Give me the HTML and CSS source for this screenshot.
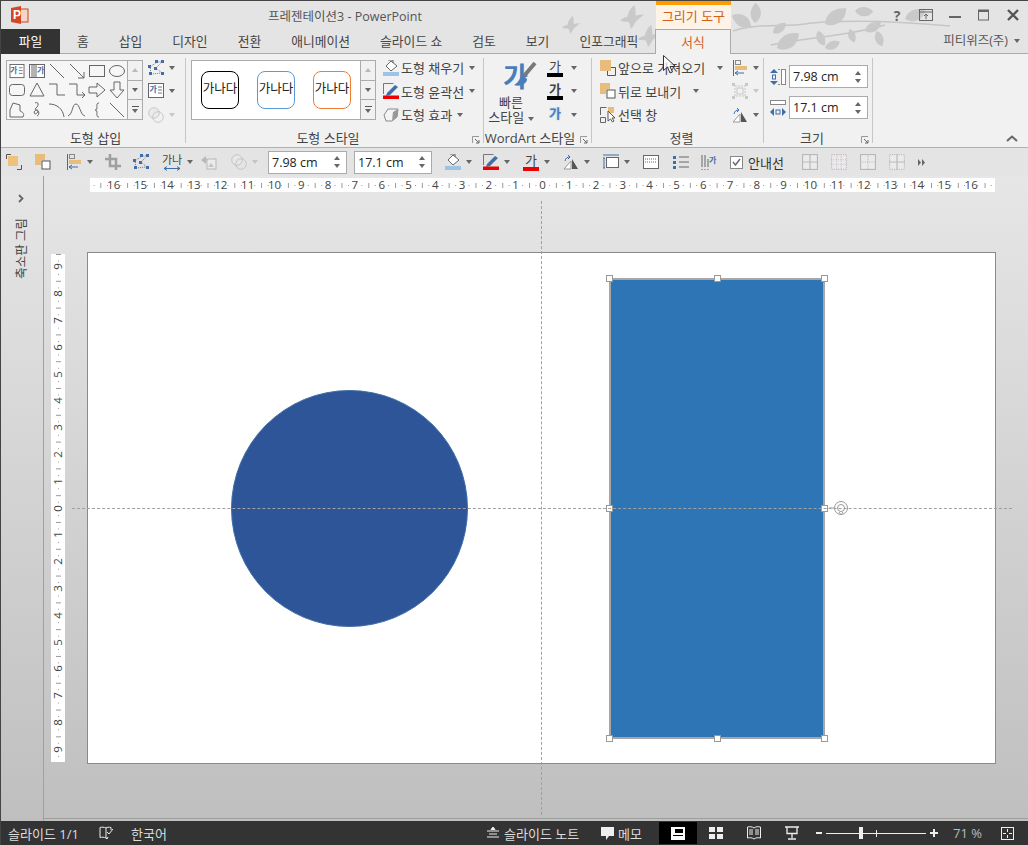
FILE: index.html
```html
<!doctype html>
<html lang="ko">
<head>
    <meta charset="UTF-8">
    <title>프레젠테이션3 - PowerPoint</title>
    <link rel="stylesheet" href="styles.css">
</head>
<body>
<svg class="defs" width="0" height="0">
    <symbol id="edit" viewBox="0 0 16 16">
        <path d="M2 7 9 2 14 2 8 8 14 13 3 14Z" fill="none" stroke="#777" stroke-dasharray="1 1"/>
        <path d="M0 5h3v3H0zM7 0h3v3H7zM13 0h3v3h-3zM6 7h3v3H6zM13 12h3v3h-3zM1 12h3v3H1z" fill="#3f6fa8"/>
    </symbol>
    <symbol id="tbox" viewBox="0 0 16 16">
        <rect x=".5" y=".5" width="15" height="14" fill="#fff" stroke="#666"/>
        <path d="M10 4h4M10 7h4M10 10h4" stroke="#777"/>
    </symbol>
    <symbol id="merge" viewBox="0 0 16 16">
        <circle cx="6" cy="6" r="5.3" fill="#e8e8e8" stroke="#bbb"/>
        <circle cx="10" cy="10" r="5.3" fill="none" stroke="#bbb"/>
    </symbol>
    <symbol id="fill" viewBox="0 0 16 16">
        <path d="M8 1 14 6 8 11 3 6Z" fill="#fff" stroke="#666"/>
        <path d="M5 0h5v3" fill="none" stroke="#666"/>
        <rect y="12" width="16" height="4" fill="#9dc3e6"/>
    </symbol>
    <symbol id="pen" viewBox="0 0 16 16">
        <path d="M.5 11V.5h10" fill="none" stroke="#777"/>
        <path d="M4 10 12 2l3 2-8 8-4 1Z" fill="#3f6fa8"/>
        <rect y="12.5" width="16" height="3.5" fill="#e00"/>
    </symbol>
    <symbol id="fx" viewBox="0 0 16 16">
        <path d="M1 8 5 2h10l-1 8-5 4H3Z" fill="#f4f4f4" stroke="#888"/>
        <path d="M9 14l5-4 1-8-5 3Z" fill="#999"/>
    </symbol>
    <symbol id="front" viewBox="0 0 16 16">
        <rect width="11" height="11" fill="#e8bd7c"/>
        <path d="M11 7.500h4.500v8h-8V11" fill="none" stroke="#555"/>
    </symbol>
    <symbol id="back" viewBox="0 0 16 16">
        <path d="M0 0h10v6H6v5H0Z" fill="#e8bd7c"/>
        <rect x="7" y="7" width="8" height="8" fill="#fff" stroke="#555"/>
    </symbol>
    <symbol id="pick" viewBox="0 0 16 16">
        <path d="M.5 8V.5h6M.5 10.500h5v5h-5z" fill="none" stroke="#666"/>
        <rect x="8" width="6" height="6" fill="#e8bd7c"/>
        <path d="M8 4v10l2.500-2 2 3 1.500-1-2-3h3Z" fill="#fff" stroke="#555"/>
    </symbol>
    <symbol id="align" viewBox="0 0 16 16">
        <path d="M1.500 0v16" stroke="#666"/>
        <rect x="3.500" y=".5" width="5" height="4" fill="none" stroke="#888"/>
        <rect x="3" y="6" width="12" height="4" fill="#e8bd7c"/>
        <path d="M3 13h9M3 13l3-2M3 13l3 2" stroke="#3f6fa8" fill="none"/>
    </symbol>
    <symbol id="group" viewBox="0 0 16 16">
        <path d="M3 3h10v10H3z" fill="none" stroke="#bbb" stroke-dasharray="2 1"/>
        <path d="M0 0h3v3H0zM13 0h3v3h-3zM0 13h3v3H0zM13 13h3v3h-3z" fill="#bbb"/>
        <rect x="5" y="5" width="6" height="6" fill="none" stroke="#bbb"/>
    </symbol>
    <symbol id="turn" viewBox="0 0 16 16">
        <path d="M1 15 8 7v8Z" fill="#fff" stroke="#999"/>
        <path d="M9 5v10h6Z" fill="#555"/>
        <path d="M2 7a5 5 0 0 1 5-4M5 1l2 2-2 2" fill="none" stroke="#3f6fa8"/>
    </symbol>
    <symbol id="height" viewBox="0 0 16 16">
        <rect x="11.500" y=".5" width="4" height="15" fill="#fff" stroke="#888"/>
        <path d="M4 0 0 4h8ZM4 16l-4-4h8Z" fill="#3f6fa8"/>
        <rect x="2.500" y="6" width="3" height="4" fill="none" stroke="#3f6fa8"/>
        <path d="M8 .5h2M8 15.500h2" stroke="#888"/>
    </symbol>
    <symbol id="width" viewBox="0 0 16 16">
        <rect x=".5" y=".5" width="15" height="4" fill="#fff" stroke="#888"/>
        <path d="M0 12l4-4v8ZM16 12l-4-4v8Z" fill="#3f6fa8"/>
        <rect x="6" y="10" width="4" height="4" fill="none" stroke="#3f6fa8"/>
    </symbol>
    <symbol id="launch" viewBox="0 0 8 8">
        <path d="M.5 7V.5H7" fill="none" stroke="#999"/>
        <path d="M3 3l4 4M7 4v3H4" fill="none" stroke="#666"/>
    </symbol>
    <path id="leaf" d="M0 0C4-7 13-8 20-3 16 5 6 7 0 0Z"/>
    <path id="bird" d="M0 13C2 11 4 10 6 10 7 6 9 2 12 0 13 3 13 6 13 9 15 8 18 8 20 8 18 10 15 12 13 14 12 16 11 18 9 20 9 18 8 16 7 14 5 14 2 14 0 13Z"/>
</svg>

<div class="window">
    <header class="top">
        <svg class="decor" width="400" height="53" viewBox="0 0 400 53">
            <use href="#bird" transform="translate(7 15) scale(.9)"/>
            <use href="#bird" transform="translate(65 4) scale(1.200)"/>
            <use href="#bird" transform="translate(83 24) scale(1.100)"/>
            <path d="M178 30C200 22 230 26 250 23S320 18 395 25M216 44C250 36 290 36 330 24" fill="none" stroke="#c6c6c6" stroke-width="1.500"/>
            <use href="#leaf" transform="translate(196 26) rotate(-140) scale(1.100)"/>
            <use href="#leaf" transform="translate(200 22) rotate(-80)"/>
            <use href="#leaf" transform="translate(218 32) rotate(-30) scale(.8)"/>
            <use href="#leaf" transform="translate(222 47) rotate(-25) scale(1.300)"/>
            <use href="#leaf" transform="translate(263 30) rotate(75) scale(.8)"/>
            <use href="#leaf" transform="translate(270 23) rotate(-28) scale(1.300)"/>
            <use href="#leaf" transform="translate(295 28) rotate(80) scale(.7)"/>
            <use href="#leaf" transform="translate(270 47) rotate(-15) scale(.8)"/>
            <use href="#leaf" transform="translate(300 10) rotate(10) scale(.9)"/>
            <use href="#leaf" transform="translate(310 30) rotate(-20) scale(.9)"/>
            <use href="#leaf" transform="translate(322 30) rotate(80) scale(.8)"/>
            <use href="#leaf" transform="translate(350 18) rotate(-15) scale(1.100)"/>
        </svg>
        <div class="titlebar">
            <svg class="applogo" width="18" height="18" viewBox="0 0 18 18">
                <rect x="8" y="3" width="9" height="13" fill="#f5d5c8" stroke="#c8441f"/>
                <path d="M0 2 10 0V18L0 16Z" fill="#d24726"/>
                <text x="2" y="13" class="logo">P</text>
            </svg>
            <div class="doc-title">프레젠테이션3 - PowerPoint</div>
            <div class="context">그리기 도구</div>
            <div class="winbtns">
                <span class="help">?</span>
                <svg width="14" height="12" viewBox="0 0 14 12"><rect x=".5" y=".5" width="13" height="11" fill="none" stroke="#666"/><path d="M.5 3h13M7 10V5M5 7l2-2 2 2" fill="none" stroke="#666"/></svg>
                <svg width="14" height="12" viewBox="0 0 14 12"><path d="M1 8h12" stroke="#666" stroke-width="2"/></svg>
                <svg width="14" height="12" viewBox="0 0 14 12"><rect x="1.500" y="1" width="10" height="10" fill="none" stroke="#666"/><path d="M1 2h11" stroke="#666" stroke-width="2"/></svg>
                <svg width="14" height="12" viewBox="0 0 14 12"><path d="M2 1l10 10M12 1 2 11" stroke="#555" stroke-width="2.400"/></svg>
            </div>
        </div>
        <nav class="tabs">
            <div class="tab file">파일</div>
            <div class="tab first">홈</div>
            <div class="tab">삽입</div>
            <div class="tab">디자인</div>
            <div class="tab">전환</div>
            <div class="tab">애니메이션</div>
            <div class="tab">슬라이드 쇼</div>
            <div class="tab">검토</div>
            <div class="tab">보기</div>
            <div class="tab">인포그래픽</div>
            <div class="tab active">서식</div>
            <div class="account">피티위즈(주) <i class="arr"></i></div>
        </nav>
    </header>

    <section class="ribbon">
        <div class="grp g-insert">
            <div class="grp-body">
                <div class="gallery shapes">
                    <div class="shape-grid">
                        <svg viewBox="0 0 20 20"><use href="#tbox" x="2" y="3" width="16" height="15"/><text x="3" y="12" class="tiny">가</text></svg>
                        <svg viewBox="0 0 20 20"><rect x="2.500" y="3.500" width="15" height="13" fill="#fff"/><path d="M5 4v12M7 4v12M9 4v12"/><text x="10" y="12" class="tiny">가</text></svg>
                        <svg viewBox="0 0 20 20"><path d="M3 3 17 17"/></svg>
                        <svg viewBox="0 0 20 20"><path d="M3 3 17 17M11 17h6v-6"/></svg>
                        <svg viewBox="0 0 20 20"><rect x="2.500" y="4.500" width="15" height="11"/></svg>
                        <svg viewBox="0 0 20 20"><ellipse cx="10" cy="10" rx="7.500" ry="5.500"/></svg>
                        <svg viewBox="0 0 20 20"><rect x="2.500" y="4.500" width="15" height="11" rx="3"/></svg>
                        <svg viewBox="0 0 20 20"><path d="M10 3 17 16H3Z"/></svg>
                        <svg viewBox="0 0 20 20"><path d="M2 4h8v11h8"/></svg>
                        <svg viewBox="0 0 20 20"><path d="M2 4h8v11h8M15 12l3 3-3 3"/></svg>
                        <svg viewBox="0 0 20 20"><path d="M2 7h8V3l8 7-8 7v-4H2Z"/></svg>
                        <svg viewBox="0 0 20 20"><path d="M7 2h6v8h4l-7 8-7-8h4Z"/></svg>
                        <svg viewBox="0 0 20 20"><path d="M6 3 3 10v7h13c2-4-1-5-3-6V5Z"/></svg>
                        <svg viewBox="0 0 20 20"><path d="M8 3c4-2 4 3 1 5s4 2 1 5-4-2-1-3 4 5 1 6"/></svg>
                        <svg viewBox="0 0 20 20"><path d="M2 4c8 0 14 5 15 13"/></svg>
                        <svg viewBox="0 0 20 20"><path d="M1 16C6 14 5 4 9 4s4 11 9 12"/></svg>
                        <svg viewBox="0 0 20 20"><path d="M12 3c-3 0-2 3-2 5s-2 2-2 2 2 0 2 2-1 5 2 5"/></svg>
                        <svg viewBox="0 0 20 20"><path d="M3 3 17 17"/></svg>
                    </div>
                    <div class="scroll">
                        <span class="up off"><i class="tri-up"></i></span>
                        <span><i class="arr"></i></span>
                        <span class="more"><i class="bar"></i><i class="arr"></i></span>
                    </div>
                </div>
                <div class="rows r-narrow">
                    <div class="row"><svg class="ic"><use href="#edit"/></svg><i class="arr"></i></div>
                    <div class="row"><svg class="ic" viewBox="0 0 16 16"><use href="#tbox"/><text x="1.500" y="9" class="tiny">가</text></svg><i class="arr"></i></div>
                    <div class="row off"><svg class="ic"><use href="#merge"/></svg><i class="arr"></i></div>
                </div>
            </div>
            <div class="grp-label">도형 삽입</div>
        </div>

        <div class="grp g-style">
            <div class="grp-body">
                <div class="gallery styles">
                    <div class="previews">
                        <div class="preview black">가나다</div>
                        <div class="preview blue">가나다</div>
                        <div class="preview orange">가나다</div>
                    </div>
                    <div class="scroll">
                        <span class="up off"><i class="tri-up"></i></span>
                        <span><i class="arr"></i></span>
                        <span class="more"><i class="bar"></i><i class="arr"></i></span>
                    </div>
                </div>
                <div class="rows r-style">
                    <div class="row"><svg class="ic"><use href="#fill"/></svg><span>도형 채우기</span><i class="arr"></i></div>
                    <div class="row"><svg class="ic"><use href="#pen"/></svg><span>도형 윤곽선</span><i class="arr"></i></div>
                    <div class="row"><svg class="ic"><use href="#fx"/></svg><span>도형 효과</span><i class="arr"></i></div>
                </div>
            </div>
            <div class="grp-label">도형 스타일</div>
            <svg class="launch"><use href="#launch"/></svg>
        </div>

        <div class="grp g-wordart">
            <div class="grp-body">
                <div class="quick">
                    <svg class="quick-ic" width="34" height="34" viewBox="0 0 34 34">
                        <text x="0" y="27" class="big">가</text>
                        <path d="M32 3 21 16" stroke="#7a7a7a" stroke-width="4"/>
                        <path d="M20 15c-4 2-3 7-9 10 6 2 13-1 13-6Z" fill="#4a7ebb"/>
                    </svg>
                    <span>빠른</span>
                    <span>스타일 <i class="arr"></i></span>
                </div>
                <div class="rows r-wa">
                    <div class="row"><span class="ga under">가</span><i class="arr"></i></div>
                    <div class="row"><span class="ga under heavy">가</span><i class="arr"></i></div>
                    <div class="row"><span class="ga glow">가</span><i class="arr"></i></div>
                </div>
            </div>
            <div class="grp-label">WordArt 스타일</div>
            <svg class="launch"><use href="#launch"/></svg>
        </div>

        <div class="grp g-arrange">
            <div class="grp-body">
                <div class="rows r-arr">
                    <div class="row"><svg class="ic"><use href="#front"/></svg><span>앞으로 가져오기</span><i class="arr"></i></div>
                    <div class="row"><svg class="ic"><use href="#back"/></svg><span>뒤로 보내기</span><i class="arr"></i></div>
                    <div class="row"><svg class="ic"><use href="#pick"/></svg><span>선택 창</span></div>
                </div>
                <div class="rows r-narrow">
                    <div class="row"><svg class="ic"><use href="#align"/></svg><i class="arr"></i></div>
                    <div class="row off"><svg class="ic"><use href="#group"/></svg><i class="arr"></i></div>
                    <div class="row"><svg class="ic"><use href="#turn"/></svg><i class="arr"></i></div>
                </div>
            </div>
            <div class="grp-label">정렬</div>
        </div>

        <div class="grp g-size">
            <div class="grp-body">
                <div class="size-fields">
                    <div class="size-row"><svg class="ic"><use href="#height"/></svg><div class="num"><span>7.98 cm</span><b class="spin"><i class="tri-up"></i><i class="arr"></i></b></div></div>
                    <div class="size-row"><svg class="ic"><use href="#width"/></svg><div class="num"><span>17.1 cm</span><b class="spin"><i class="tri-up"></i><i class="arr"></i></b></div></div>
                </div>
            </div>
            <div class="grp-label">크기</div>
            <svg class="launch"><use href="#launch"/></svg>
        </div>

        <svg class="collapse" width="12" height="7" viewBox="0 0 12 7"><path d="M1 6 6 1.500 11 6" fill="none" stroke="#666" stroke-width="2"/></svg>
    </section>

    <section class="qbar">
        <div class="q w29"><svg class="ic" viewBox="0 0 16 16"><rect x="2" y="2" width="10" height="10" fill="#eec27a"/><path d="M.5 5V.5H5M15.500 11v4.500H11" fill="none" stroke="#555"/></svg></div>
        <div class="q w31"><svg class="ic"><use href="#back"/></svg></div>
        <div class="q w39"><svg class="ic"><use href="#align"/></svg><i class="arr"></i></div>
        <div class="q w28 off"><svg class="ic" viewBox="0 0 16 16"><path d="M5 0v12h11M0 5h11v11" fill="none" stroke="#888" stroke-width="2.500"/></svg></div>
        <div class="q w29"><svg class="ic"><use href="#edit"/></svg></div>
        <div class="q w39"><span class="ganam">가나<svg width="18" height="5" viewBox="0 0 18 5"><path d="M1 2.500h16M1 2.500l3-2M1 2.500l3 2M17 2.500l-3-2M17 2.500l-3 2" fill="none" stroke="#3f6fa8"/></svg></span><i class="arr"></i></div>
        <div class="q w30 off"><svg class="ic" viewBox="0 0 16 16"><path d="M0 6 5 2v3h4v2H5v3Z" fill="#aaa"/><rect x="6" y="5" width="9" height="10" fill="#eee" stroke="#aaa"/><path d="M7 13l3-4 3 4Z" fill="#bbb"/></svg></div>
        <div class="q w37 off"><svg class="ic"><use href="#merge"/></svg><i class="arr"></i></div>
        <div class="num q-num"><span>7.98 cm</span><b class="spin"><i class="tri-up"></i><i class="arr"></i></b></div>
        <div class="num q-num second"><span>17.1 cm</span><b class="spin"><i class="tri-up"></i><i class="arr"></i></b></div>
        <div class="q w38"><svg class="ic"><use href="#fill"/></svg><i class="arr"></i></div>
        <div class="q w40"><svg class="ic"><use href="#pen"/></svg><i class="arr"></i></div>
        <div class="q w40"><span class="ga under red">가</span><i class="arr"></i></div>
        <div class="q w40"><svg class="ic"><use href="#turn"/></svg><i class="arr"></i></div>
        <div class="q w40"><svg class="ic" viewBox="0 0 16 16"><rect x="3.500" y="3.500" width="12" height="10" fill="#fff" stroke="#666"/><path d="M0 1h16M1 4v10M0 4h2M0 14h2" fill="none" stroke="#3f6fa8"/></svg><i class="arr"></i></div>
        <div class="q w30"><svg class="ic" viewBox="0 0 16 16"><rect x=".5" y="1.500" width="15" height="13" fill="#fff" stroke="#666"/><path d="M2 5h12M2 8h12" stroke="#3f6fa8" stroke-dasharray="1 1"/></svg></div>
        <div class="q w28"><svg class="ic" viewBox="0 0 16 16"><path d="M0 2h3v3H0zM0 7h3v3H0zM0 12h3v3H0z" fill="#3f6fa8"/><path d="M6 3h10M6 8h10M6 13h10" stroke="#666"/></svg></div>
        <div class="q w29"><svg class="ic" viewBox="0 0 16 16"><path d="M1 1v12M4 1v12M7 5v8M1 15v1M4 15v1M7 15v1" stroke="#666"/><text x="8" y="9" class="tiny">가</text></svg></div>
        <div class="q w72">
            <span class="check"><svg width="9" height="8" viewBox="0 0 9 8"><path d="M1 4l2.500 3L8 1" fill="none" stroke="#666" stroke-width="1.400"/></svg></span>
            <span class="guide-label">안내선</span>
        </div>
        <div class="q w29 off"><svg class="ic" viewBox="0 0 14 14"><rect x=".5" y=".5" width="13" height="13" fill="#eee" stroke="#aaa"/><path d="M7 0v14M0 7h14" stroke="#aaa"/></svg></div>
        <div class="q w29 off"><svg class="ic" viewBox="0 0 14 14"><rect x=".5" y=".5" width="13" height="13" fill="#eee" stroke="#b6a8b6" stroke-dasharray="1 1"/><path d="M5 0v14M9 0v14M0 5h14M0 9h14" stroke="#c6b8c6" stroke-dasharray="1 1"/></svg></div>
        <div class="q w29 off"><svg class="ic" viewBox="0 0 14 14"><rect x=".5" y=".5" width="13" height="13" fill="#eee" stroke="#aaa"/><path d="M7 0v14M0 7h14" stroke="#aaa" stroke-dasharray="1 1"/></svg></div>
        <div class="q w29 off"><svg class="ic" viewBox="0 0 14 14"><rect x=".5" y=".5" width="13" height="13" fill="#eee" stroke="#b6a8b6" stroke-dasharray="1 1"/><path d="M7 0v14M0 7h14" stroke="#aaa"/></svg></div>
        <svg class="overflow" width="7" height="7" viewBox="0 0 7 7"><path d="M0 0l3 3.500L0 7ZM4 0l3 3.500L4 7Z" fill="#666"/></svg>
    </section>

    <main class="work">
        <aside class="side">
            <svg width="6" height="9" viewBox="0 0 6 9"><path d="M1 1l3.500 3.500L1 8" fill="none" stroke="#666" stroke-width="1.800"/></svg>
            <span class="side-label">축소판 그림</span>
        </aside>
        <div class="stage">
            <div class="hruler">
                <span>16</span><span>15</span><span>14</span><span>13</span><span>12</span><span>11</span><span>10</span><span>9</span><span>8</span><span>7</span><span>6</span><span>5</span><span>4</span><span>3</span><span>2</span><span>1</span><span>0</span><span>1</span><span>2</span><span>3</span><span>4</span><span>5</span><span>6</span><span>7</span><span>8</span><span>9</span><span>10</span><span>11</span><span>12</span><span>13</span><span>14</span><span>15</span><span>16</span>
            </div>
            <div class="slide-row">
                <div class="vruler">
                    <span>9</span><span>8</span><span>7</span><span>6</span><span>5</span><span>4</span><span>3</span><span>2</span><span>1</span><span>0</span><span>1</span><span>2</span><span>3</span><span>4</span><span>5</span><span>6</span><span>7</span><span>8</span><span>9</span>
                </div>
                <div class="slide">
                    <div class="circle"></div>
                    <div class="rect">
                        <i class="h tl"></i><i class="h tc"></i><i class="h tr"></i>
                        <i class="h ml"></i><i class="h mr"></i>
                        <i class="h bl"></i><i class="h bc"></i><i class="h br"></i>
                    </div>
                    <svg class="rotate" width="20" height="16" viewBox="0 0 20 16">
                        <path d="M0 8h5" stroke="#999"/>
                        <circle cx="12" cy="8" r="6.500" fill="#fff" stroke="#999"/>
                        <circle cx="12" cy="8" r="3.500" fill="none" stroke="#999"/>
                        <path d="M10 12l2 3 2-3" fill="#fff" stroke="#999"/>
                    </svg>
                </div>
            </div>
            <i class="guide-v"></i>
            <i class="guide-h"></i>
        </div>
    </main>

    <footer class="status">
        <span class="st-slide">슬라이드 1/1</span>
        <svg class="st-book" width="14" height="14" viewBox="0 0 14 14"><path d="M7 2C5 1 3 1 1 1.500v10c2-.5 4-.5 6 .5 0-3 0-7 0-10ZM7 2c1-1 3-1 5-.5V4M7 12l1 1 1-2" fill="none" stroke="#eee"/><path d="M8 6l2 2 4-5" fill="none" stroke="#eee"/></svg>
        <span class="st-lang">한국어</span>
        <svg class="st-notes-ic" width="12" height="12" viewBox="0 0 12 12"><path d="M6 0 4 2.500h4ZM0 4h12M2 7h8M0 10h12" stroke="#eee" fill="#eee"/></svg>
        <span class="st-notes">슬라이드 노트</span>
        <svg class="st-memo-ic" width="13" height="13" viewBox="0 0 13 13"><path d="M0 0h13v9H8l-3 4V9H0Z" fill="#eee"/></svg>
        <span class="st-memo">메모</span>
        <div class="view current"><svg width="14" height="13" viewBox="0 0 14 13"><rect width="14" height="13" fill="#fff"/><path d="M4 2h8v4H4zM2 8h10v1H2z" fill="#000"/></svg></div>
        <div class="view"><svg width="15" height="13" viewBox="0 0 15 13"><path d="M0 0h6v5H0zM8 0h6v5H8zM0 7h6v5H0zM8 7h6v5H8z" fill="#eee"/></svg></div>
        <div class="view"><svg width="14" height="14" viewBox="0 0 14 14"><path d="M.5 1C3 .5 5 .5 7 2c2-1.500 4-1.500 6.500-1v11c-2.500-.5-4.500-.5-6.500 1-2-1.500-4-1.500-6.500-1ZM2 4h4M2 6h4M2 8h4M8 4h4M8 6h4M8 8h4" fill="none" stroke="#eee"/></svg></div>
        <div class="view"><svg width="14" height="14" viewBox="0 0 14 14"><path d="M0 1h14M2 1.500v6h10v-6M7 8v4M3 13h8" fill="none" stroke="#eee" stroke-width="1.300"/></svg></div>
        <div class="zoom">
            <i class="z-minus"></i>
            <div class="z-track"><i class="z-mid"></i><i class="z-thumb"></i></div>
            <i class="z-plus"></i>
        </div>
        <span class="st-pct">71 %</span>
        <svg class="st-fit" width="13" height="13" viewBox="0 0 13 13"><rect x=".5" y=".5" width="12" height="12" fill="none" stroke="#eee"/><path d="M6.500 2v3M6.500 8v3M2 6.500h3M8 6.500h3" stroke="#eee"/></svg>
    </footer>

    <svg class="cursor" width="13" height="19" viewBox="0 0 13 19"><path d="M.5.5v15l4-3.500 2.500 6 2.500-1-2.500-5.500h5.500Z" fill="#fff" fill-opacity=".7" stroke="#333"/></svg>
</div>
</body>
</html>
```

FILE: styles.css
```css
/* Global Styles */
* {
    box-sizing: border-box;
}

body {
    margin: 0;
    font-family: "Open Sans", "Noto Sans CJK KR", sans-serif;
    font-size: 13px;
    color: #444;
    overflow: hidden;
}

i {
    display: block;
}

.defs {
    position: absolute;
}

.window {
    position: relative;
    display: flex;
    flex-direction: column;
    width: 1028px;
    height: 845px;
    background: #f1f1f1;
    border-left: 1px solid #444;
    border-top: 1px solid #444;
    overflow: hidden;
}

.tiny {
    font-size: 8px;
    font-weight: bold;
    fill: #3f6fa8;
    stroke: none;
}

.logo {
    font-size: 12px;
    font-weight: bold;
    fill: #fff;
    font-family: "Liberation Sans", sans-serif;
}

.big {
    font-size: 27px;
    font-weight: bold;
    fill: #4a7ebb;
}

/* Title bar and tabs */
.top {
    position: relative;
    background: #e4e4e4;
    border-bottom: 1px solid #ababab;
    height: 53px;
}

.decor {
    position: absolute;
    left: 554px;
    top: 0;
    fill: #c9c9c9;
}

.titlebar {
    position: relative;
    display: flex;
    align-items: center;
    height: 28px;
}

.applogo {
    margin-left: 10px;
}

.doc-title {
    width: 388px;
    margin-left: 239px;
    color: #555;
    font-size: 12.500px;
}

.context {
    align-self: stretch;
    width: 75px;
    background: #fdf3e6;
    border-top: 4px solid #ff9a00;
    color: #d2601a;
    line-height: 22px;
    text-align: center;
    white-space: nowrap;
}

.winbtns {
    display: flex;
    align-items: center;
    gap: 15px;
    margin-left: auto;
    margin-right: 8px;
}

.help {
    font-weight: bold;
    font-size: 14px;
    color: #666;
    width: 14px;
    text-align: center;
}

.tabs {
    position: relative;
    display: flex;
    height: 25px;
    font-size: 12.800px;
    line-height: 24px;
}

.tab {
    padding: 0 15px;
    white-space: nowrap;
    color: #444;
}

.tab.file {
    width: 59px;
    margin-right: 2px;
    background: #333;
    color: #fff;
    text-align: center;
    padding: 0;
}

.tab.active {
    position: absolute;
    left: 654px;
    width: 76px;
    padding: 0;
    height: 25px;
    background: #f1f1f1;
    border: 1px solid #ababab;
    border-bottom: 0;
    color: #d2601a;
    text-align: center;
}

.account {
    display: flex;
    align-items: center;
    gap: 6px;
    margin-left: auto;
    margin-right: 8px;
    font-size: 12.500px;
    height: 23px;
    color: #555;
}

/* Ribbon */
.ribbon {
    position: relative;
    display: flex;
    height: 94px;
    border-bottom: 1px solid #b0b0b0;
    background: #f1f1f1;
}

.grp {
    position: relative;
    display: flex;
    flex-direction: column;
    height: 85px;
    margin-top: 4px;
    border-right: 1px solid #c6c6c6;
}

.grp-body {
    display: flex;
    flex: 1;
    padding-top: 2px;
}

.grp-label {
    height: 14px;
    line-height: 18px;
    text-align: center;
    color: #444;
    white-space: nowrap;
}

.launch {
    position: absolute;
    right: 3px;
    bottom: -1px;
    width: 8px;
    height: 8px;
}

.g-insert {
    width: 185px;
    padding-left: 5px;
}

.g-style {
    width: 298px;
    padding-left: 5px;
}

.g-style .grp-label {
    padding-right: 18px;
}

.g-wordart {
    width: 108px;
}

.g-wordart .grp-label {
    padding-right: 15px;
}

.g-arrange {
    width: 172px;
    padding-left: 8px;
}

.g-size {
    width: 109px;
    padding-left: 6px;
}

.g-size .grp-label {
    padding-right: 18px;
}

.gallery {
    display: flex;
    height: 60px;
    border: 1px solid #ababab;
    background: #fff;
}

.shapes {
    width: 137px;
    background: #f6f6f6;
}

.styles {
    width: 185px;
}

.shape-grid {
    display: grid;
    grid-template-columns: repeat(6, 20px);
    grid-auto-rows: 19.300px;
    width: 121px;
}

.shape-grid svg {
    width: 20px;
    height: 20px;
    fill: none;
    stroke: #666;
}

.scroll {
    display: flex;
    flex-direction: column;
    margin-left: auto;
    width: 15px;
    border-left: 1px solid #ababab;
    background: #f1f1f1;
}

.scroll span {
    display: flex;
    flex: 1;
    flex-direction: column;
    gap: 2px;
    align-items: center;
    justify-content: center;
    border-bottom: 1px solid #ababab;
}

.scroll span:last-child {
    border-bottom: 0;
}

.scroll .off i {
    opacity: .4;
}

.bar {
    width: 7px;
    height: 1px;
    background: #555;
}

.arr {
    flex: none;
    width: 0;
    height: 0;
    border-left: 3.500px solid transparent;
    border-right: 3.500px solid transparent;
    border-top: 4px solid #666;
}

.tri-up {
    width: 0;
    height: 0;
    border-left: 3.500px solid transparent;
    border-right: 3.500px solid transparent;
    border-bottom: 4px solid #666;
}

.previews {
    display: flex;
    align-items: center;
    gap: 18px;
    padding-left: 9px;
}

.preview {
    width: 38px;
    height: 38px;
    border-radius: 8px;
    border: 1px solid;
    background: #fff;
    color: #222;
    line-height: 34px;
    text-align: center;
    white-space: nowrap;
    font-size: 12.500px;
}

.preview.black {
    border-color: #000;
}

.preview.blue {
    border-color: #5b9bd5;
}

.preview.orange {
    border-color: #ed7d31;
}

.rows {
    display: flex;
    flex-direction: column;
    margin-top: -4px;
}

.row {
    display: flex;
    align-items: center;
    gap: 2px;
    height: 23.500px;
    white-space: nowrap;
}

.row.off,
.q.off {
    opacity: .75;
}

.row.off .arr,
.q.off .arr {
    border-top-color: #bbb;
}

.ic {
    flex: none;
    width: 16px;
    height: 16px;
}

.r-narrow {
    margin-left: 5px;
}

.r-narrow .row {
    gap: 5px;
}

.r-style {
    margin-left: 7px;
}

.r-style .arr {
    margin-left: 3px;
}

.quick {
    display: flex;
    flex-direction: column;
    align-items: center;
    width: 54px;
    line-height: 15px;
    white-space: nowrap;
}

.quick-ic {
    margin: 0 0 1px 18px;
}

.quick .arr {
    display: inline-block;
    vertical-align: middle;
}

.r-wa {
    margin-left: 9px;
}

.r-wa .row {
    gap: 8px;
}

.ga {
    display: block;
    width: 16px;
    height: 18px;
    line-height: 14px;
    text-align: center;
    font-size: 13px;
    color: #444;
}

.ga.under {
    border-bottom: 4px solid #000;
}

.ga.heavy {
    font-weight: bold;
}

.ga.red {
    border-bottom-color: #e00;
}

.ga.glow {
    font-weight: bold;
    color: #4a7ebb;
    text-shadow: 0 0 2px #9dc3e6;
}

.r-arr {
    width: 127px;
}

.r-arr .arr {
    margin-left: 10px;
}

.size-fields {
    display: flex;
    flex-direction: column;
    gap: 8px;
    padding-top: 5px;
}

.size-row {
    display: flex;
    align-items: center;
    gap: 3px;
}

.num {
    display: flex;
    align-items: center;
    justify-content: space-between;
    width: 79px;
    height: 23px;
    padding: 0 6px 0 3px;
    background: #fff;
    border: 1px solid #ababab;
    color: #222;
    font-size: 12.500px;
}

.spin {
    display: flex;
    flex-direction: column;
    gap: 4px;
}

.collapse {
    position: absolute;
    right: 10px;
    bottom: 5px;
}

/* Format toolbar */
.qbar {
    display: flex;
    align-items: center;
    height: 28px;
    padding-left: 5px;
    background: #e4e4e4;
}

.q {
    display: flex;
    flex: none;
    align-items: center;
    gap: 5px;
    height: 22px;
}

.w28 { width: 28px; }
.w29 { width: 29px; }
.w30 { width: 30px; }
.w31 { width: 31px; }
.w37 { width: 37px; }
.w38 { width: 38px; }
.w39 { width: 39px; }
.w40 { width: 40px; }
.w72 { width: 72px; }

.ganam {
    display: flex;
    flex-direction: column;
    align-items: center;
    line-height: 13px;
    font-size: 11px;
}

.q-num {
    flex: none;
}

.q-num.second {
    width: 78px;
    margin-left: 7px;
    margin-right: 13px;
}

.check {
    display: flex;
    align-items: center;
    justify-content: center;
    width: 13px;
    height: 13px;
    background: #fff;
    border: 1px solid #888;
}

.guide-label {
    color: #333;
    white-space: nowrap;
}

/* Workspace */
.work {
    flex: 1;
    display: flex;
    background: linear-gradient(#e6e6e6, #bfbfbf);
}

.side {
    display: flex;
    flex-direction: column;
    align-items: center;
    gap: 15px;
    width: 43px;
    padding: 18px 3px 0 0;
    border-right: 1px solid #a0a0a0;
}

.side-label {
    writing-mode: vertical-rl;
    text-orientation: sideways;
    transform: rotate(180deg);
    color: #444;
    font-size: 12.500px;
    white-space: nowrap;
}

.stage {
    position: relative;
    flex: 1;
    margin-bottom: 2px;
    padding-top: 2px;
    border-bottom: 1px solid #a0a0a0;
}

.hruler {
    display: flex;
    width: 905px;
    height: 14px;
    margin-left: 46px;
    padding-left: 10.300px;
    background:
        linear-gradient(90deg, #999 1px, transparent 1px) 10.300px 50% / 26.800px 5px repeat-x,
        linear-gradient(90deg, #999 1px, transparent 1px) 3.600px 50% / 13.400px 1px repeat-x,
        #fff;
}

.hruler span {
    flex: 0 0 26.800px;
    line-height: 14px;
    text-align: center;
    font-size: 11.500px;
    color: #444;
}

.slide-row {
    display: flex;
    align-items: flex-start;
    margin-top: 60px;
    padding-left: 7px;
}

.vruler {
    display: flex;
    flex-direction: column;
    justify-content: center;
    width: 14px;
    height: 508px;
    margin-top: 2px;
    overflow: hidden;
    background:
        linear-gradient(#999 1px, transparent 1px) 50% 0 / 5px 26.800px repeat-y,
        linear-gradient(#999 1px, transparent 1px) 50% 6.700px / 1px 13.400px repeat-y,
        #fff;
}

.vruler span {
    flex: 0 0 26.800px;
    writing-mode: vertical-rl;
    transform: rotate(180deg);
    line-height: 14px;
    text-align: center;
    font-size: 11.500px;
    color: #444;
}

.slide {
    position: relative;
    width: 909px;
    height: 512px;
    margin-left: 22px;
    background: #fff;
    border: 1px solid #8a8a8a;
}

.circle {
    position: absolute;
    left: 143px;
    top: 137px;
    width: 237px;
    height: 237px;
    border-radius: 50%;
    background: #2e5597;
    border: 1px solid #3f6fa8;
}

.rect {
    position: absolute;
    left: 521px;
    top: 25px;
    width: 216px;
    height: 461px;
    background: #2e75b6;
    border: 2px solid #a6a6a6;
}

.h {
    position: absolute;
    width: 7px;
    height: 7px;
    background: #fff;
    border: 1px solid #999;
}

.tl { left: -5px; top: -5px; }
.tc { left: 103px; top: -5px; }
.tr { right: -5px; top: -5px; }
.ml { left: -5px; top: 225px; }
.mr { right: -5px; top: 225px; }
.bl { left: -5px; bottom: -5px; }
.bc { left: 103px; bottom: -5px; }
.br { right: -5px; bottom: -5px; }

.rotate {
    position: absolute;
    left: 741px;
    top: 247px;
}

.guide-v {
    position: absolute;
    left: 497px;
    top: 25px;
    height: 614px;
    border-left: 1px dashed #a0a0a0;
}

.guide-h {
    position: absolute;
    left: 28px;
    right: 16px;
    top: 332px;
    border-top: 1px dashed #a0a0a0;
}

/* Status bar */
.status {
    display: flex;
    align-items: center;
    height: 24px;
    background: #333;
    color: #ddd;
    white-space: nowrap;
}

.st-slide {
    margin-left: 7px;
    width: 90px;
}

.st-book {
    margin-right: 18px;
    margin-left: 1px;
}

.st-lang {
    width: 356px;
}

.st-notes-ic {
    margin-right: 5px;
}

.st-notes {
    width: 97px;
}

.st-memo-ic {
    margin-right: 4px;
}

.st-memo {
    width: 41px;
}

.view {
    display: flex;
    align-items: center;
    justify-content: center;
    width: 38px;
    height: 22px;
}

.view.current {
    background: #000;
}

.zoom {
    display: flex;
    align-items: center;
    gap: 4px;
    margin-left: 5px;
}

.z-minus {
    width: 6px;
    height: 2px;
    background: #eee;
}

.z-track {
    position: relative;
    width: 100px;
    height: 1px;
    background: #eee;
}

.z-mid {
    position: absolute;
    left: 50px;
    top: -3px;
    width: 1px;
    height: 7px;
    background: #eee;
}

.z-thumb {
    position: absolute;
    left: 33px;
    top: -6px;
    width: 4px;
    height: 12px;
    background: #eee;
}

.z-plus {
    width: 8px;
    height: 8px;
    background:
        linear-gradient(#eee, #eee) 50% 50% / 2px 8px no-repeat,
        linear-gradient(#eee, #eee) 50% 50% / 8px 2px no-repeat;
}

.st-pct {
    width: 33px;
    margin-left: 15px;
    color: #bbb;
}

.st-fit {
    margin-left: 15px;
}

.cursor {
    position: absolute;
    left: 662px;
    top: 54px;
}
```
